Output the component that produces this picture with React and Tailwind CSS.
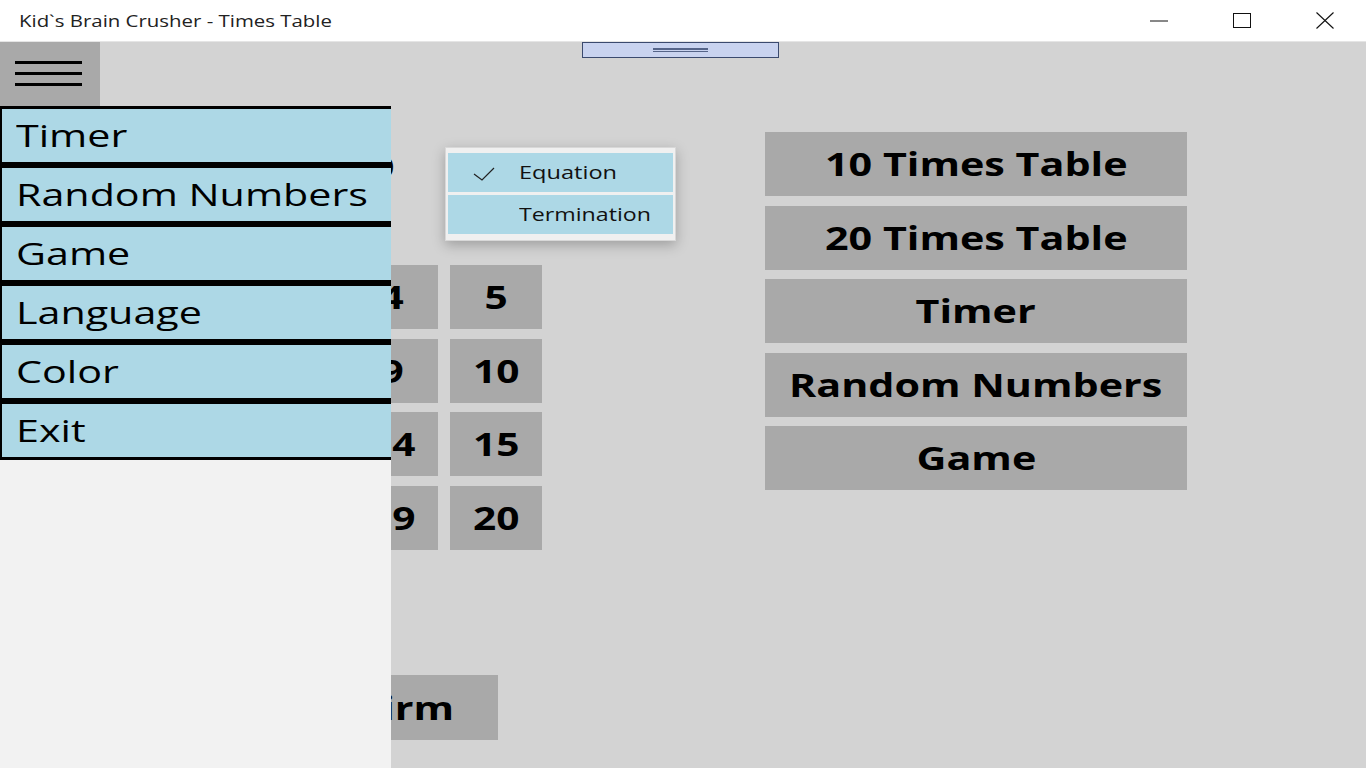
import React from "react";

const font = { fontFamily: '"Open Sans", "Noto Sans", sans-serif' };

function NumCell({ n }) {
  return (
    <div className="h-[64px] bg-[#a9a9a9] flex items-center justify-center text-[32px] font-bold text-black leading-none">
      <span className="inline-block scale-x-[1.27]">{n}</span>
    </div>
  );
}

function BigButton({ label }) {
  return (
    <div className="h-[64px] bg-[#a9a9a9] flex items-center justify-center text-[32px] font-bold text-black leading-none">
      <span className="inline-block scale-x-[1.29]">{label}</span>
    </div>
  );
}

function MenuItem({ label }) {
  return (
    <div className="w-[400px] h-[59px] shrink-0 border-[3px] border-l-2 border-black bg-[#add8e6] flex items-center pl-[14px] text-[31px] text-black leading-none">
      <span className="inline-block origin-left scale-x-[1.33]">{label}</span>
    </div>
  );
}

export default function App() {
  const nums = Array.from({ length: 20 }, (_, i) => i + 1);
  return (
    <div className="w-[1366px] h-[768px] flex flex-col overflow-hidden bg-white" style={font}>
      {/* Title bar */}
      <div className="h-[42px] shrink-0 bg-white flex items-center justify-between border-b border-[#e5e5e5]">
        <div className="pl-[19px] text-[17px] text-[#222]">
          <span className="inline-block origin-left scale-x-[1.2]">Kid`s Brain Crusher - Times Table</span>
        </div>
        <div className="flex h-full">
          <div className="w-[83px] flex items-center justify-center">
            <svg width="18" height="2" viewBox="0 0 18 2"><line x1="0" y1="1" x2="18" y2="1" stroke="#111" strokeWidth="1" /></svg>
          </div>
          <div className="w-[83px] flex items-center justify-center">
            <svg width="18" height="15" viewBox="0 0 18 15"><rect x="0.5" y="0.5" width="17" height="14" fill="none" stroke="#111" strokeWidth="1" /></svg>
          </div>
          <div className="w-[83px] flex items-center justify-center">
            <svg width="18" height="17" viewBox="0 0 18 17"><path d="M0.5 0.5 L17.5 16.5 M17.5 0.5 L0.5 16.5" stroke="#111" strokeWidth="1.1" fill="none" /></svg>
          </div>
        </div>
      </div>

      {/* Main */}
      <div className="relative flex-1 bg-[#d3d3d3]">
        <div className="flex flex-col">
          {/* handle */}
          <div className="ml-[582px] w-[197px] h-[16px] bg-[#c9d3ef] border border-[#3b4a6e] flex flex-col items-center justify-center gap-[1px]">
            <div className="w-[55px] h-[1.5px] bg-[#556488]" />
            <div className="w-[55px] h-[1.5px] bg-[#556488]" />
          </div>

          <div className="flex mt-[74px]">
            {/* left column */}
            <div className="ml-[34px] w-[508px] flex flex-col">
              <div className="h-[133px] flex items-start justify-end pr-[147px] pt-[20px] text-[28px] text-black leading-none">
                <span className="inline-block origin-right scale-x-[1.3]">Range 1 - 20</span>
              </div>
              <div className="grid grid-cols-[repeat(5,92px)] gap-x-[12px] gap-y-[9.5px]">
                {nums.map((n) => (
                  <NumCell key={n} n={n} />
                ))}
              </div>
              <div className="mt-[125.5px] ml-[206px] w-[258px] h-[65px] bg-[#a9a9a9] flex items-center justify-center pl-[4px] text-[32px] font-bold text-black leading-none">
                <span className="inline-block scale-x-[1.29]">Confirm</span>
              </div>
            </div>

            {/* right column */}
            <div className="ml-[223px] w-[422px] flex flex-col gap-[9.5px]">
              <BigButton label="10 Times Table" />
              <BigButton label="20 Times Table" />
              <BigButton label="Timer" />
              <BigButton label="Random Numbers" />
              <BigButton label="Game" />
            </div>
          </div>
        </div>

        {/* Dropdown overlay */}
        <div className="absolute left-[445px] top-[105px] w-[231px] h-[94px] bg-[#f0f0f0] border border-[#d8d8d8] shadow-[0_4px_12px_rgba(0,0,0,0.25)] pt-[5px] px-[2px] flex flex-col gap-[3px]">
          <div className="h-[39px] bg-[#add8e6] flex items-center relative">
            <svg className="absolute left-[24px] top-[12px]" width="24" height="16" viewBox="0 0 24 16">
              <path d="M2 9 L10 15 L22 3" fill="none" stroke="#222" strokeWidth="1.2" />
            </svg>
            <span className="ml-[71px] inline-block origin-left scale-x-[1.24] text-[19px] text-[#111] leading-none">Equation</span>
          </div>
          <div className="h-[39px] bg-[#add8e6] flex items-center">
            <span className="ml-[71px] inline-block origin-left scale-x-[1.22] text-[19px] text-[#111] leading-none">Termination</span>
          </div>
        </div>

        {/* Flyout pane overlay */}
        <div className="absolute left-0 top-0 w-[391px] h-full flex flex-col overflow-hidden">
          <div className="h-[64px] shrink-0 flex">
            <div className="w-[100px] h-full bg-[#a9a9a9] flex flex-col justify-start pt-[19px] pl-[15px] gap-[8px]">
              <div className="w-[67px] h-[3px] bg-black" />
              <div className="w-[67px] h-[3px] bg-black" />
              <div className="w-[67px] h-[3px] bg-black" />
            </div>
          </div>
          <MenuItem label="Timer" />
          <MenuItem label="Random Numbers" />
          <MenuItem label="Game" />
          <MenuItem label="Language" />
          <MenuItem label="Color" />
          <MenuItem label="Exit" />
          <div className="flex-1 bg-[#f2f2f2]" />
        </div>
      </div>
    </div>
  );
}
